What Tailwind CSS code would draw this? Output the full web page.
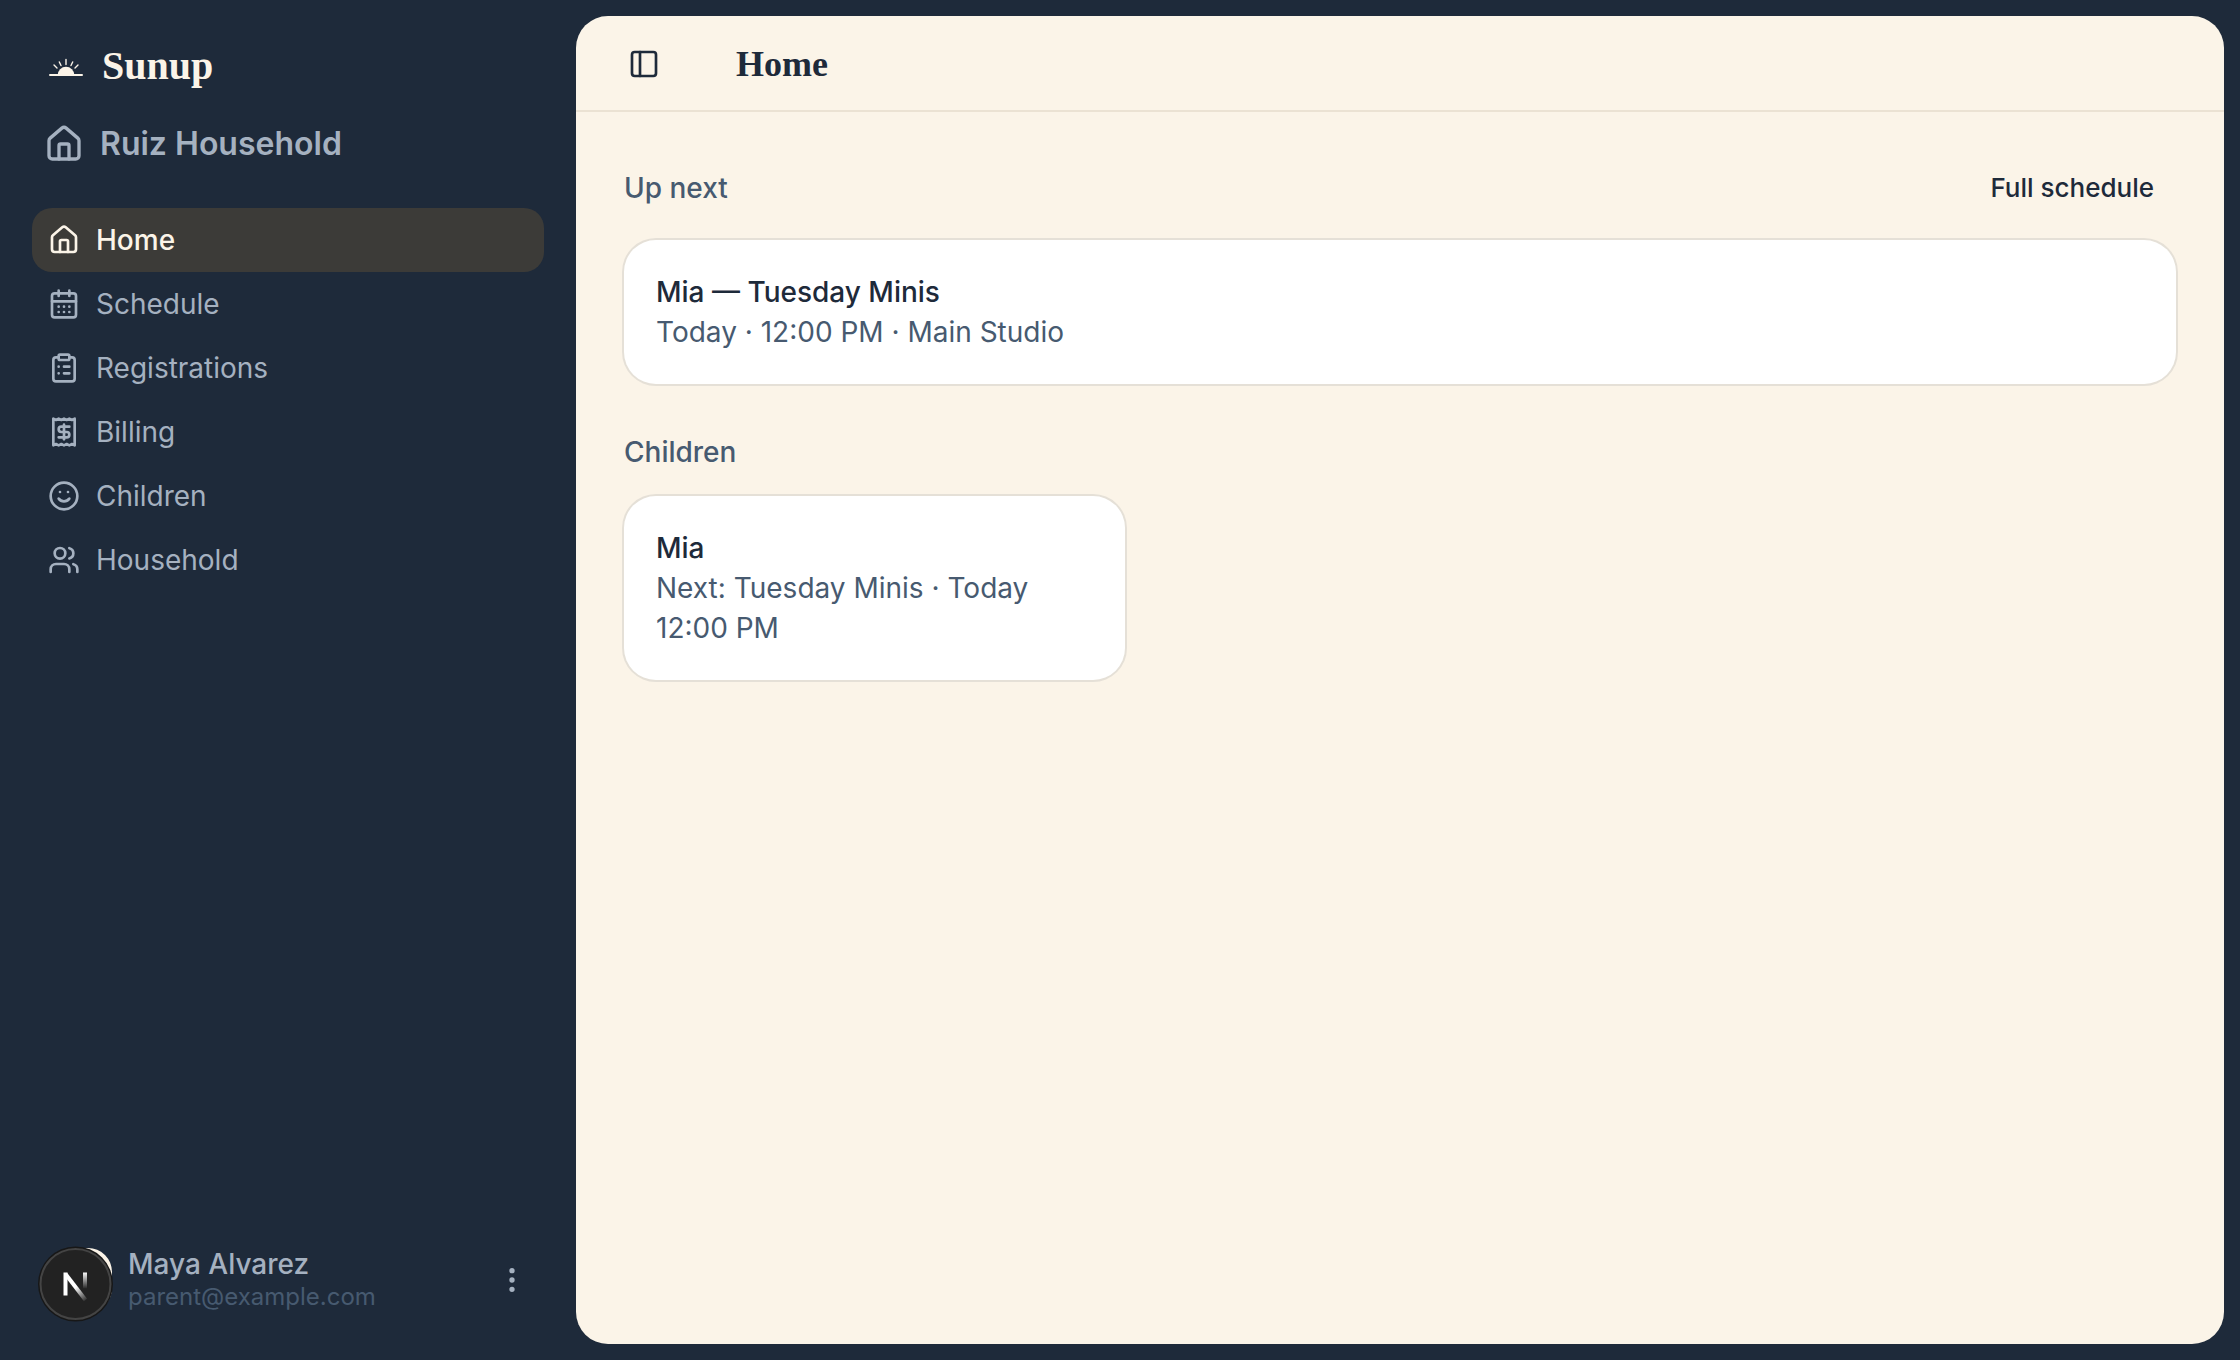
<!DOCTYPE html>
<html lang="en">
<head>
    <meta charset="UTF-8">
    <meta name="viewport" content="width=device-width, initial-scale=1.0">
    <title>Home - Sunup</title>
    <script src="https://cdn.jsdelivr.net/npm/@tailwindcss/browser@4"></script>
</head>
<body class="flex min-h-screen bg-[#1e2a3a] font-['Inter',sans-serif] text-[28px] leading-10 text-[#1e2a3a]">

    <!-- Sidebar -->
    <aside class="flex w-144 shrink-0 flex-col p-8 text-[#a5b1c0]">
        <a href="#" class="flex h-17 items-center gap-3.5 pl-3 text-[#fbf4e8]">
            <svg class="h-11 w-11" viewBox="0 0 44 44" fill="none" stroke="currentColor" stroke-linecap="round">
                <path d="M6 31h32" stroke-width="2"/>
                <path d="M13.700 31a8.300 8.300 0 0 1 16.600 0z" fill="currentColor" stroke="none"/>
                <path d="M22 15.500v5M15.300 18l1.700 3.500M28.700 18 27 21.500M10 21l3 3M34 21l-3 3" stroke-width="1.400"/>
            </svg>
            <span class="font-['Liberation_Serif',serif] text-[40px] font-bold">Sunup</span>
        </a>
        <div class="mt-2 flex h-18 items-center gap-4 pl-3">
            <svg class="h-10 w-10" viewBox="0 0 24 24" fill="none" stroke="currentColor" stroke-width="2" stroke-linecap="round" stroke-linejoin="round">
                <path d="M15 21v-8a1 1 0 0 0-1-1h-4a1 1 0 0 0-1 1v8"/>
                <path d="M3 10a2 2 0 0 1 .709-1.528l7-6a2 2 0 0 1 2.582 0l7 6A2 2 0 0 1 21 10v9a2 2 0 0 1-2 2H5a2 2 0 0 1-2-2z"/>
            </svg>
            <span class="text-[32px] font-semibold">Ruiz Household</span>
        </div>

        <nav class="mt-7 flex flex-col">
            <a href="#" class="flex h-16 items-center gap-4 rounded-[20px] bg-[#3c3b38] px-4 font-medium text-[#fbf4e8]">
                <svg class="h-8 w-8" viewBox="0 0 24 24" fill="none" stroke="currentColor" stroke-width="2" stroke-linecap="round" stroke-linejoin="round">
                    <path d="M15 21v-8a1 1 0 0 0-1-1h-4a1 1 0 0 0-1 1v8"/>
                    <path d="M3 10a2 2 0 0 1 .709-1.528l7-6a2 2 0 0 1 2.582 0l7 6A2 2 0 0 1 21 10v9a2 2 0 0 1-2 2H5a2 2 0 0 1-2-2z"/>
                </svg>
                Home
            </a>
            <a href="#" class="flex h-16 items-center gap-4 rounded-[20px] px-4">
                <svg class="h-8 w-8" viewBox="0 0 24 24" fill="none" stroke="currentColor" stroke-width="2" stroke-linecap="round" stroke-linejoin="round">
                    <path d="M8 2v4M16 2v4M3 10h18"/>
                    <rect width="18" height="18" x="3" y="4" rx="2"/>
                    <path d="M8 14h.01M12 14h.01M16 14h.01M8 18h.01M12 18h.01M16 18h.01"/>
                </svg>
                Schedule
            </a>
            <a href="#" class="flex h-16 items-center gap-4 rounded-[20px] px-4">
                <svg class="h-8 w-8" viewBox="0 0 24 24" fill="none" stroke="currentColor" stroke-width="2" stroke-linecap="round" stroke-linejoin="round">
                    <rect width="8" height="4" x="8" y="2" rx="1"/>
                    <path d="M16 4h2a2 2 0 0 1 2 2v14a2 2 0 0 1-2 2H6a2 2 0 0 1-2-2V6a2 2 0 0 1 2-2h2"/>
                    <path d="M12 11h4M12 16h4M8 11h.01M8 16h.01"/>
                </svg>
                Registrations
            </a>
            <a href="#" class="flex h-16 items-center gap-4 rounded-[20px] px-4">
                <svg class="h-8 w-8" viewBox="0 0 24 24" fill="none" stroke="currentColor" stroke-width="2" stroke-linecap="round" stroke-linejoin="round">
                    <path d="M4 2v20l2-1 2 1 2-1 2 1 2-1 2 1 2-1 2 1V2l-2 1-2-1-2 1-2-1-2 1-2-1-2 1Z"/>
                    <path d="M16 8h-6a2 2 0 1 0 0 4h4a2 2 0 1 1 0 4H8"/>
                    <path d="M12 17.500v-11"/>
                </svg>
                Billing
            </a>
            <a href="#" class="flex h-16 items-center gap-4 rounded-[20px] px-4">
                <svg class="h-8 w-8" viewBox="0 0 24 24" fill="none" stroke="currentColor" stroke-width="2" stroke-linecap="round" stroke-linejoin="round">
                    <circle cx="12" cy="12" r="10"/>
                    <path d="M8 14s1.500 2 4 2 4-2 4-2M9 9h.01M15 9h.01"/>
                </svg>
                Children
            </a>
            <a href="#" class="flex h-16 items-center gap-4 rounded-[20px] px-4">
                <svg class="h-8 w-8" viewBox="0 0 24 24" fill="none" stroke="currentColor" stroke-width="2" stroke-linecap="round" stroke-linejoin="round">
                    <path d="M16 21v-2a4 4 0 0 0-4-4H6a4 4 0 0 0-4 4v2"/>
                    <circle cx="9" cy="7" r="4"/>
                    <path d="M22 21v-2a4 4 0 0 0-3-3.870M16 3.130a4 4 0 0 1 0 7.750"/>
                </svg>
                Household
            </a>
        </nav>

        <!-- Account -->
        <button type="button" class="relative mt-auto flex h-24 items-center gap-4 px-4 text-left">
            <span class="h-16 w-16 shrink-0 rounded-3xl bg-[#fbf4e8]"></span>
            <span class="flex min-w-0 flex-1 flex-col">
                <span class="leading-[34px] font-medium">Maya Alvarez</span>
                <span class="text-2xl leading-8 text-[#475a70]">parent@example.com</span>
            </span>
            <svg class="h-8 w-8" viewBox="0 0 24 24" fill="none" stroke="currentColor" stroke-width="2">
                <circle cx="12" cy="12" r="1"/>
                <circle cx="12" cy="5" r="1"/>
                <circle cx="12" cy="19" r="1"/>
            </svg>
            <!-- Dev tools badge -->
            <svg class="absolute top-3.5 left-1.5 h-19 w-19" viewBox="0 0 76 76" fill="none">
                <defs>
                    <linearGradient id="stem" x1="0" y1="26" x2="0" y2="43" gradientUnits="userSpaceOnUse">
                        <stop stop-color="#fff"/>
                        <stop offset="1" stop-color="#fff" stop-opacity="0"/>
                    </linearGradient>
                    <linearGradient id="diagonal" x1="38" y1="41" x2="49" y2="55" gradientUnits="userSpaceOnUse">
                        <stop stop-color="#fff"/>
                        <stop offset="1" stop-color="#fff" stop-opacity="0"/>
                    </linearGradient>
                </defs>
                <circle cx="37.500" cy="38" r="37.500" fill="#171717"/>
                <circle cx="37.500" cy="38" r="35" fill="#222" stroke="#444" stroke-width="2"/>
                <rect x="25.500" y="26.500" width="4" height="23" fill="#fff"/>
                <path d="M27.500 28 47.500 54" stroke="url(#diagonal)" stroke-width="4"/>
                <rect x="45" y="26.500" width="4" height="16" fill="url(#stem)"/>
            </svg>
        </button>
    </aside>

    <!-- Content -->
    <main class="my-4 mr-4 min-w-0 flex-1 rounded-4xl bg-[#fbf4e8]">
        <header class="flex h-24 items-center gap-16 border-b-2 border-[#ebe2d3] px-10 pt-0.5">
            <button type="button" aria-label="Toggle sidebar" class="flex h-14 w-14 items-center justify-center">
                <svg class="h-8 w-8" viewBox="0 0 24 24" fill="none" stroke="currentColor" stroke-width="2" stroke-linecap="round" stroke-linejoin="round">
                    <rect width="18" height="18" x="3" y="3" rx="2"/>
                    <path d="M9 3v18"/>
                </svg>
            </button>
            <h1 class="font-['Liberation_Serif',serif] text-4xl font-bold">Home</h1>
        </header>

        <div class="flex flex-col gap-12 p-12">
            <section class="flex flex-col gap-6">
                <div class="flex h-14 items-center justify-between">
                    <h2 class="font-medium text-[#475a70]">Up next</h2>
                    <a href="#" class="px-5.5 text-[26px] font-medium">Full schedule</a>
                </div>
                <div class="rounded-4xl bg-white p-8 ring-2 ring-[#e5e0d7]">
                    <p class="font-medium">Mia — Tuesday Minis</p>
                    <p class="text-[#475a70]">Today · 12:00 PM · Main Studio</p>
                </div>
            </section>

            <section class="flex flex-col gap-6">
                <h2 class="font-medium text-[#475a70]">Children</h2>
                <div class="grid grid-cols-3 gap-6">
                    <div class="rounded-4xl bg-white p-8 ring-2 ring-[#e5e0d7]">
                        <p class="font-medium">Mia</p>
                        <p class="text-[#475a70]">Next: Tuesday Minis · Today 12:00 PM</p>
                    </div>
                </div>
            </section>
        </div>
    </main>

</body>
</html>
